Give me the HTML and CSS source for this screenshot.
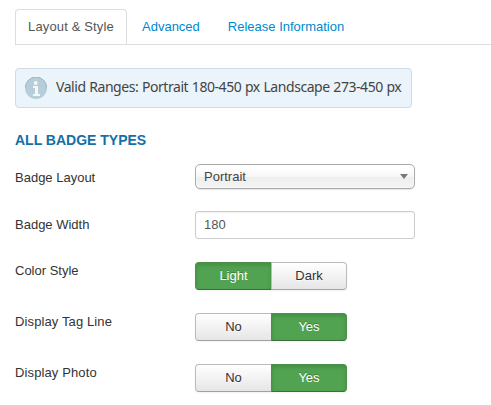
FILE: index.html
```html
<!DOCTYPE html>
<html lang="en">
<head>
<meta charset="utf-8">
<title>Layout &amp; Style</title>
<link rel="stylesheet" href="styles.css">
</head>
<body>
<nav class="tabs">
  <a class="tab active">Layout &amp; Style</a>
  <a class="tab">Advanced</a>
  <a class="tab">Release Information</a>
</nav>
<main>
  <div class="notice">
    <svg class="info" viewBox="0 0 22 22" width="22" height="22">
      <circle cx="11" cy="11" r="11" fill="#b7cdd9"/>
      <path d="M.5 10.500a10.500 10.500 0 0 1 21 0" fill="none" stroke="#98b8c8"/>
      <circle cx="10.700" cy="6" r="2" fill="#f1f8fc"/>
      <path d="M8 9h5v8h2v2H8v-2h2v-6H8z" fill="#f1f8fc"/>
    </svg>
    <span class="message">Valid Ranges: Portrait 180-450 px Landscape 273-450 px</span>
  </div>
  <h2>ALL BADGE TYPES</h2>
  <div class="row select-row">
    <span class="label">Badge Layout</span>
    <div class="select"><span>Portrait</span><i class="arrow"></i></div>
  </div>
  <div class="row input-row">
    <span class="label">Badge Width</span>
    <div class="input">180</div>
  </div>
  <div class="row toggle-row">
    <span class="label">Color Style</span>
    <div class="group"><span class="btn on">Light</span><span class="btn">Dark</span></div>
  </div>
  <div class="row toggle-row">
    <span class="label wide">Display Tag Line</span>
    <div class="group"><span class="btn">No</span><span class="btn on">Yes</span></div>
  </div>
  <div class="row toggle-row">
    <span class="label wide">Display Photo</span>
    <div class="group"><span class="btn">No</span><span class="btn on">Yes</span></div>
  </div>
</main>
</body>
</html>
```
FILE: styles.css
```css
* { box-sizing: border-box; }
body {
  margin: 0;
  background: #fff;
  color: #333;
  font: 13px/18px "Liberation Sans", Arial, sans-serif;
  overflow: hidden;
}
.tabs {
  display: flex;
  margin-left: 15px;
  padding-top: 9px;
  height: 45px;
  border-bottom: 1px solid #ddd;
}
.tab {
  height: 35px;
  padding: 8px 12px 0;
  margin-right: 2px;
  border: 1px solid transparent;
  border-bottom: 0;
  color: #08c;
  white-space: nowrap;
}
.tab.active {
  width: 112px;
  color: #555;
  border-color: #ddd;
  border-radius: 4px 4px 0 0;
  letter-spacing: .15px;
}
main { padding: 23px 0 0 15px; }
.notice {
  display: flex;
  align-items: center;
  width: 397px;
  height: 40px;
  padding-left: 9px;
  border: 1px solid #cfdce5;
  border-radius: 4px;
  background: #ebf4fa;
}
.message {
  margin-left: 9px;
  margin-top: -2px;
  color: #444;
  font: 14px/20px "Noto Sans", sans-serif;
  letter-spacing: -.45px;
  word-spacing: .5px;
  white-space: nowrap;
}
h2 {
  margin: 23px 0 14px;
  color: #146fa6;
  font-size: 14px;
  line-height: 19px;
}
.row { display: flex; }
.label { width: 180px; padding-top: 5px; }
.label.wide { letter-spacing: .12px; }
.select-row { height: 47px; }
.input-row { height: 51px; }
.toggle-row { height: 51px; }
.toggle-row .label { padding-top: 0; }
.select {
  display: flex;
  justify-content: space-between;
  align-items: center;
  width: 220px;
  height: 25px;
  padding: 0 6px 0 8px;
  border: 1px solid #aaa;
  border-radius: 5px;
  background: linear-gradient(#fff 15%, #f6f6f6 50%, #eee 52%, #f4f4f4);
  box-shadow: inset 0 0 3px #fff, 0 1px 1px rgba(0,0,0,.1);
  color: #444;
}
.arrow {
  border: 4px solid transparent;
  border-top: 5px solid #777;
  border-bottom: 0;
}
.input {
  width: 220px;
  height: 28px;
  padding: 4px 8px;
  border: 1px solid #ccc;
  border-radius: 3px;
  color: #555;
  box-shadow: inset 0 1px 1px rgba(0,0,0,.05);
}
.group { display: flex; width: 152px; height: 28px; }
.btn {
  width: 77px;
  padding: 4px 0;
  border: 1px solid #bbb;
  border-bottom-color: #a2a2a2;
  border-radius: 4px 0 0 4px;
  background: linear-gradient(#fff, #e6e6e6);
  text-align: center;
  text-shadow: 0 1px 1px rgba(255,255,255,.75);
  box-shadow: inset 0 1px 0 rgba(255,255,255,.2), 0 1px 2px rgba(0,0,0,.05);
}
.btn + .btn { margin-left: -1px; width: 76px; border-radius: 0 4px 4px 0; }
.btn.on {
  color: #fff;
  background: #51a351;
  border-color: #499349 #499349 #387038;
  text-shadow: 0 -1px 0 rgba(0,0,0,.25);
  box-shadow: inset 0 2px 4px rgba(0,0,0,.15), 0 1px 2px rgba(0,0,0,.05);
}
```
